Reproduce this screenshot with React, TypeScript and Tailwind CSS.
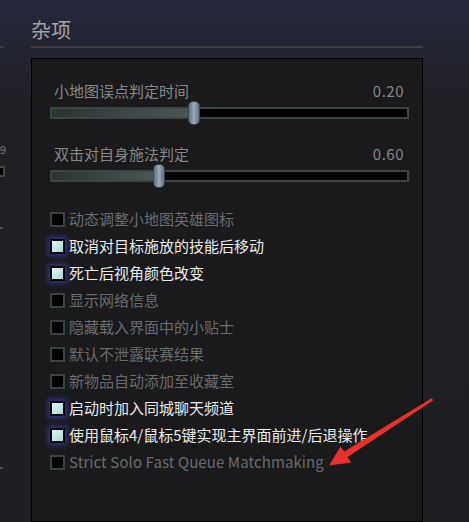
import React from 'react'

const font = { fontFamily: '"Noto Sans CJK SC", "Noto Sans", sans-serif' }

type Opt = { label: string; checked: boolean; latin?: boolean }

const options: Opt[] = [
  { label: '动态调整小地图英雄图标', checked: false },
  { label: '取消对目标施放的技能后移动', checked: true },
  { label: '死亡后视角颜色改变', checked: true },
  { label: '显示网络信息', checked: false },
  { label: '隐藏载入界面中的小贴士', checked: false },
  { label: '默认不泄露联赛结果', checked: false },
  { label: '新物品自动添加至收藏室', checked: false },
  { label: '启动时加入同城聊天频道', checked: true },
  { label: '使用鼠标4/鼠标5键实现主界面前进/后退操作', checked: true },
  { label: 'Strict Solo Fast Queue Matchmaking', checked: false, latin: true },
]

const Slider = ({ label, value, pos }: { label: string; value: string; pos: number }) => (
  <div className="flex flex-col">
    <div className="flex justify-between items-center h-[19px] pl-[4px] pr-[5px] text-[15px] text-[#858787]">
      <span>{label}</span>
      <span className="tracking-[0.5px]">{value}</span>
    </div>
    <div className="relative h-[24px] pt-[6px]">
      <div className="h-[12px] border-2 border-[#3c4543] bg-black flex">
        <div
          className="h-full bg-gradient-to-r from-[#2c3333] via-[#3c4646] to-[#4a5656]"
          style={{ width: pos }}
        />
      </div>
      <div
        className="absolute top-0 h-[24px] w-[12px] rounded-[5px] border border-[#3a4450] bg-gradient-to-r from-[#62717f] via-[#9aabba] to-[#62717f]"
        style={{ left: pos - 1 }}
      />
    </div>
  </div>
)

const Check = ({ o }: { o: Opt }) => (
  <div className="flex items-center h-[27px]">
    {o.checked ? (
      <div className="w-[15px] h-[15px] border-2 border-black bg-gradient-to-br from-[#dff7f6] to-[#a9d6d6] shadow-[0_0_5px_2px_#34338a]" />
    ) : (
      <div className="w-[15px] h-[15px] border-2 border-[#3a4240] bg-black" />
    )}
    <span
      className={
        'ml-[4px] ' +
        (o.checked ? 'text-[15px] text-[#ececec]' : 'text-[15px] text-[#686b6b]') +
        (o.latin ? ' tracking-[0.1px] text-[14px]' : '')
      }
    >
      {o.label}
    </span>
  </div>
)

export default function App() {
  return (
    <div
      className="relative w-[469px] h-[522px] overflow-hidden flex bg-gradient-to-b from-[#26273b] via-[#1f2025] via-[20%] to-[#1e1f23]"
      style={font}
    >
      {/* left edge leftovers */}
      <div className="w-[31px] flex flex-col">
        <div className="mt-[46px] w-[4px] h-[2px] bg-[#3a3b3e]" />
        <div className="mt-[95px] text-[11px] leading-[12px] text-[#7a7a7a]">9</div>
        <div className="mt-[11px] -ml-[6px] w-[11px] h-[11px] border-2 border-[#3c4543] bg-black" />
        <div className="mt-[50px] w-[3px] h-[2px] bg-[#4a4b4e]" />
        <div className="mt-[238px] w-[3px] h-[2px] bg-[#4a4b4e]" />
      </div>

      <div className="w-[392px] flex flex-col">
        <div className="mt-[19px] h-[27px] text-[20px] leading-[22px] text-[#a2a3a5]">杂项</div>
        <div className="h-[2px] bg-[#3c3d40]" />
        <div className="mt-[10px] flex-1 border border-black bg-[#1a1a1d] pl-[18px] pr-[13px] pt-[23px]">
          <Slider label="小地图误点判定时间" value="0.20" pos={139} />
          <div className="mt-[20px]">
            <Slider label="双击对自身施法判定" value="0.60" pos={104} />
          </div>
          <div className="mt-[18px]">
            {options.map((o) => (
              <Check key={o.label} o={o} />
            ))}
          </div>
        </div>
      </div>

      <div className="flex-1" />

      {/* red annotation arrow */}
      <svg className="absolute left-0 top-0" width="469" height="522" viewBox="0 0 469 522">
        <polygon
          points="432,398 433,400.5 347.6,457 351,462.5 329,465.5 340.5,446.5 344.2,451.6"
          fill="#e8302d"
        />
      </svg>
    </div>
  )
}
